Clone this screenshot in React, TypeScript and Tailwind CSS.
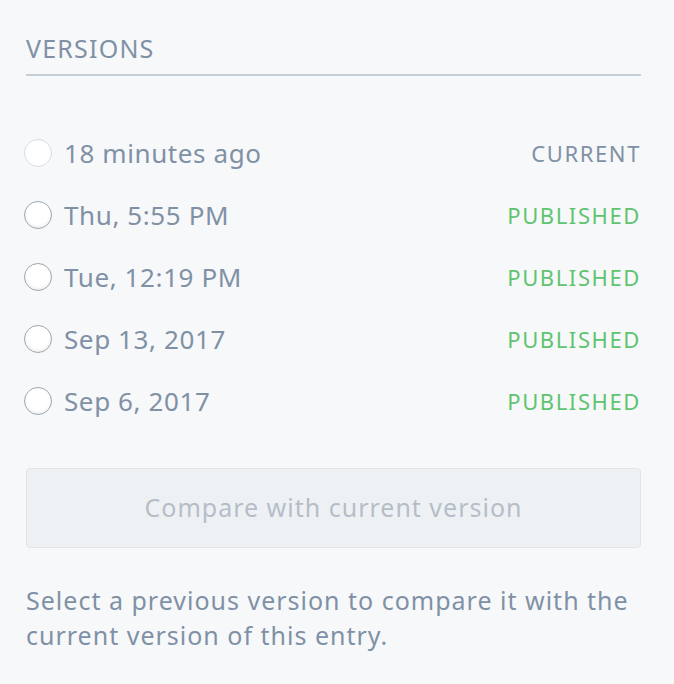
import { FC } from "react";

interface Version {
  label: string;
  status: "current" | "published";
}

const versions: Version[] = [
  { label: "18 minutes ago", status: "current" },
  { label: "Thu, 5:55 PM", status: "published" },
  { label: "Tue, 12:19 PM", status: "published" },
  { label: "Sep 13, 2017", status: "published" },
  { label: "Sep 6, 2017", status: "published" },
];

const VersionRow: FC<Version> = ({ label, status }) => {
  const isCurrent = status === "current";
  return (
    <li className="flex h-[62px] items-center justify-between">
      <label className="-ml-[2px] flex items-center gap-[12px]">
        <span
          className={
            isCurrent
              ? "block h-[28px] w-[28px] rounded-full border border-[#d8dde1] bg-white"
              : "block h-[28px] w-[28px] rounded-full border border-[#9ea6ae] bg-white shadow-[inset_0_-2px_3px_rgba(0,0,0,0.06)]"
          }
        />
        <span className="text-[26px] leading-none tracking-[0.6px] text-[#8091a5]">
          {label}
        </span>
      </label>
      <span
        className={
          isCurrent
            ? "text-[22px] leading-none tracking-[1.6px] text-[#8091a5]"
            : "text-[22px] leading-none tracking-[1.6px] text-[#5fc46e]"
        }
      >
        {isCurrent ? "CURRENT" : "PUBLISHED"}
      </span>
    </li>
  );
};

const App: FC = () => {
  return (
    <div
      className="min-h-[684px] w-[674px] bg-[#f7f8fa] pl-[26px] pr-[33px] pt-[36px]"
      style={{ fontFamily: "'Noto Sans', sans-serif" }}
    >
      <h2 className="border-b-2 border-[#c6ced6] pb-[13px] text-[25px] leading-none tracking-[1.2px] text-[#8091a5]">
        VERSIONS
      </h2>
      <ul className="mt-[46px] flex flex-col">
        {versions.map((v) => (
          <VersionRow key={v.label} {...v} />
        ))}
      </ul>
      <button
        disabled
        className="mt-[36px] flex h-[80px] w-full items-center justify-center rounded-[4px] border border-[#dfe5e8] bg-[#eef1f4] text-[25px] tracking-[1px] text-[#b5bec8]"
      >
        Compare with current version
      </button>
      <p className="mt-[35px] text-[25px] leading-[35px] tracking-[1px] text-[#8091a5]">
        Select a previous version to compare it with the current version of this entry.
      </p>
    </div>
  );
};

export default App;
